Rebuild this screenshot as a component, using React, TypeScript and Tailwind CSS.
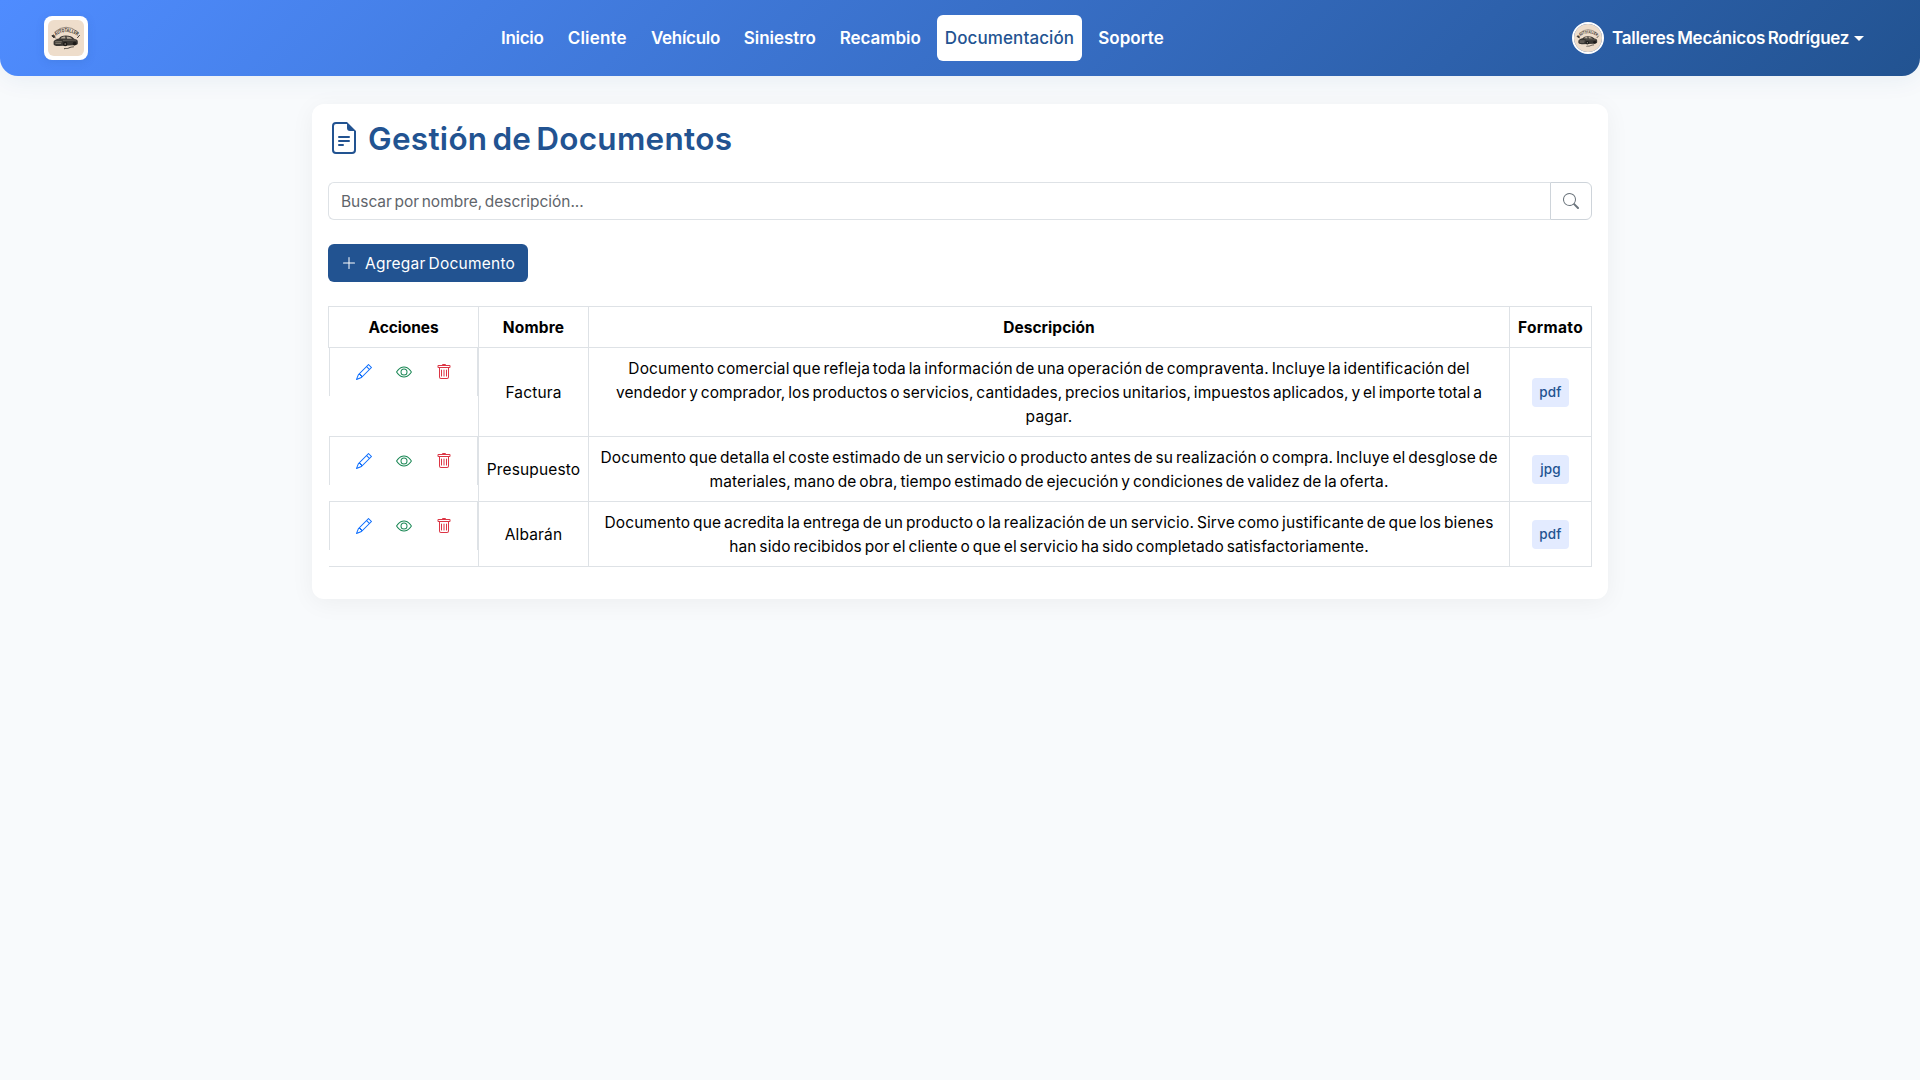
import { BsEye, BsFileEarmarkText, BsPencil, BsPlusLg, BsSearch, BsTrash } from "react-icons/bs";

const navItems = [
  { label: "Inicio", cls: "w-[58.5px] tracking-[-0.3px]" },
  { label: "Cliente", cls: "w-[75.5px] tracking-[0.2px]" },
  { label: "Vehículo", cls: "w-[85px] tracking-[-0.3px]" },
  { label: "Siniestro", cls: "w-[87.5px] tracking-[-0.05px]" },
  { label: "Recambio", cls: "w-[97.5px] tracking-[-0.05px]" },
  { label: "Documentación", cls: "w-[145px] tracking-[0.1px]", active: true },
  { label: "Soporte", cls: "w-[82px] tracking-[0.05px]" },
];

const documents = [
  {
    name: "Factura",
    lines: [
      { text: "Documento comercial que refleja toda la información de una operación de compraventa. Incluye la identificación del", cls: "tracking-[0.14px]" },
      { text: "vendedor y comprador, los productos o servicios, cantidades, precios unitarios, impuestos aplicados, y el importe total a", cls: "tracking-[0.08px]" },
      { text: "pagar.", cls: "" },
    ],
    format: "pdf",
  },
  {
    name: "Presupuesto",
    lines: [
      { text: "Documento que detalla el coste estimado de un servicio o producto antes de su realización o compra. Incluye el desglose de", cls: "tracking-[0.14px]" },
      { text: "materiales, mano de obra, tiempo estimado de ejecución y condiciones de validez de la oferta.", cls: "tracking-[0.11px]" },
    ],
    format: "jpg",
  },
  {
    name: "Albarán",
    lines: [
      { text: "Documento que acredita la entrega de un producto o la realización de un servicio. Sirve como justificante de que los bienes", cls: "tracking-[0.14px]" },
      { text: "han sido recibidos por el cliente o que el servicio ha sido completado satisfactoriamente.", cls: "tracking-[0.12px]" },
    ],
    format: "pdf",
  },
];

function WorkshopLogo({ id, className }: { id: string; className: string }) {
  return (
    <svg viewBox="0 0 36 36" className={className}>
      <rect width="36" height="36" fill="#eeddcb" />
      <path id={id} d="M7.6 15.8 Q18 8.4 29 15.4" fill="none" />
      <path d="M6.6 12 Q18 2.600 29.600 11.800" fill="none" stroke="#5a534b" strokeWidth="0.6" />
      <text fontFamily="Liberation Sans" fontWeight="700" fontSize="5.2" fill="#2e2a26">
        <textPath href={`#${id}`} textLength="23.5" lengthAdjust="spacingAndGlyphs">AUTOTALLER</textPath>
      </text>
      <path d="M3.800 15.800l1.800-.8 1.400 1.400-1.200 1.400zM6 16.600l1.800 1.800M31.800 15l-2.600 3" stroke="#38332e" strokeWidth="0.9" fill="#38332e" />
      <path
        d="M5.600 21.400c1-1.800 3.600-2.800 5.400-3 1.400-1.800 3.200-2.800 6.800-2.800 3.800 0 6.400.8 8.400 3.200 2.400.4 3.600 1.200 3.600 2.600v2.200c0 1.200-1.800 1.600-3.800 1.700L11 26c-3.200.2-5.200-.6-5.400-1.800z"
        fill="#3a3733"
      />
      <path d="M12.600 18.400c1-1.400 2.400-1.800 4.600-1.800l.3 2zM18.600 16.600c2.400 0 4.200.7 5.600 2.100l-5.300.1z" fill="#b5a999" />
      <path d="M7.200 21.800h6.600M7.400 23.400h5.800" stroke="#a89d8e" strokeWidth="0.7" />
      <path d="M15 20.400l13-.3" stroke="#8b8277" strokeWidth="0.5" />
      <circle cx="17.200" cy="24" r="2.200" fill="#1d1b19" />
      <circle cx="17.200" cy="24" r="0.8" fill="#9b9184" />
      <circle cx="26.600" cy="23.600" r="1.900" fill="#1d1b19" />
      <path d="M16 28.800c2-.8 3 .2 4.800-.8s3.200-1 5-1.200" fill="none" stroke="#38332e" strokeWidth="0.9" />
    </svg>
  );
}

function Header() {
  return (
    <header className="flex h-[76px] items-center rounded-b-[18px] bg-[linear-gradient(135deg,#4f8cff_0%,#225391_100%)] pr-14 pl-11 text-[17px] font-semibold text-white shadow-[0_4px_24px_rgba(34,83,145,0.07)]">
      <a className="flex size-11 items-center justify-center rounded-lg bg-white shadow-[0_2px_8px_rgba(34,83,145,0.15)]">
        <WorkshopLogo id="brand-arc" className="size-9 rounded-md" />
      </a>
      <nav className="ml-[405px] flex gap-2">
        {navItems.map((item) => (
          <a
            key={item.label}
            className={`flex h-[46px] items-center justify-center rounded-md pt-0.5 whitespace-nowrap ${item.cls} ${item.active ? "bg-white font-medium text-[#225391]" : ""}`}
          >
            {item.label}
          </a>
        ))}
      </nav>
      <div className="ml-auto flex items-center">
        <WorkshopLogo id="avatar-arc" className="size-8 rounded-full border-2 border-white" />
        <span className="ml-2 w-[238px] pt-0.5 tracking-[-0.22px] whitespace-nowrap [word-spacing:-1.6px]">
          Talleres Mecánicos Rodríguez
        </span>
        <span className="ml-1 h-0 w-0 border-x-[5px] border-t-[5px] border-x-transparent border-t-white" />
      </div>
    </header>
  );
}

const iconButton = "flex size-8 items-center justify-center";

export default function App() {
  return (
    <div className="min-h-screen bg-[#f8fafc] font-['Inter',sans-serif] text-black">
      <Header />
      <main className="mx-auto mt-7 w-[1296px] rounded-xl bg-white p-4 shadow-[0_4px_24px_rgba(0,0,0,0.05)]">
        <h1 className="flex h-[38px] items-start gap-2 text-[31.5px] leading-[38px] font-semibold tracking-[0.3px] text-[#225391] [word-spacing:-3.3px]">
          <BsFileEarmarkText className="mt-0.5 size-8" />
          Gestión de Documentos
        </h1>

        <div className="mt-6 flex h-[38px] text-[15.5px]">
          <input
            className="min-w-0 flex-1 rounded-l-md border border-r-0 border-[#dee2e6] px-3 pt-0.5 tracking-[-0.03px] outline-none [word-spacing:-1.65px] placeholder:text-[#5f656b]"
            placeholder="Buscar por nombre, descripción..."
          />
          <button className="flex w-[42px] items-center justify-center rounded-r-md border border-[#ced4da] text-[#6c757d]">
            <BsSearch className="size-4" />
          </button>
        </div>

        <button className="mt-6 flex h-[38px] w-[200px] items-center gap-2 rounded-md bg-[#225391] pl-[13px] text-[15.5px] tracking-[0.24px] whitespace-nowrap text-white [word-spacing:-1.65px]">
          <BsPlusLg className="size-4" />
          <span className="pt-0.5">Agregar Documento</span>
        </button>

        <table className="mt-6 mb-4 w-full table-fixed border-collapse text-center text-[15.5px] leading-6 tracking-[0.15px] [word-spacing:-1.65px]">
          <colgroup>
            <col className="w-[150px]" />
            <col className="w-[110px]" />
            <col />
            <col className="w-[82px]" />
          </colgroup>
          <thead>
            <tr className="border-y border-[#dee2e6] font-bold">
              <th className="border-x border-[#dee2e6] pt-[9px] pb-[7px] tracking-[-0.1px]">Acciones</th>
              <th className="border-x border-[#dee2e6] pt-[9px] pb-[7px] tracking-[0.2px]">Nombre</th>
              <th className="border-x border-[#dee2e6] pt-[9px] pb-[7px] tracking-[0.05px]">Descripción</th>
              <th className="border-x border-[#dee2e6] pt-[9px] pb-[7px] tracking-[0.35px]">Formato</th>
            </tr>
          </thead>
          <tbody>
            {documents.map((doc) => (
              <tr key={doc.name} className="border-y border-[#dee2e6]">
                <td className="flex justify-center gap-2 border-x border-[#dee2e6] py-2 pr-2 pl-[9px]">
                  <button className={`${iconButton} text-[#0d6efd]`}>
                    <BsPencil className="size-4" />
                  </button>
                  <button className={`${iconButton} text-[#198754]`}>
                    <BsEye className="size-4" />
                  </button>
                  <button className={`${iconButton} text-[#dc3545]`}>
                    <BsTrash className="size-4" />
                  </button>
                </td>
                <td className="border-x border-[#dee2e6] pt-[9px] pb-[7px] align-middle">{doc.name}</td>
                <td className="border-x border-[#dee2e6] pt-[9px] pb-[7px] align-middle">
                  {doc.lines.map((line) => (
                    <div key={line.text} className={`whitespace-nowrap ${line.cls}`}>
                      {line.text}
                    </div>
                  ))}
                </td>
                <td className="border-x border-[#dee2e6] align-middle">
                  <span className="mx-auto flex h-[29px] w-[37px] items-center justify-center rounded bg-[#e3ebff] text-[13.5px] font-medium text-[#225391]">
                    {doc.format}
                  </span>
                </td>
              </tr>
            ))}
          </tbody>
        </table>
      </main>
    </div>
  );
}
